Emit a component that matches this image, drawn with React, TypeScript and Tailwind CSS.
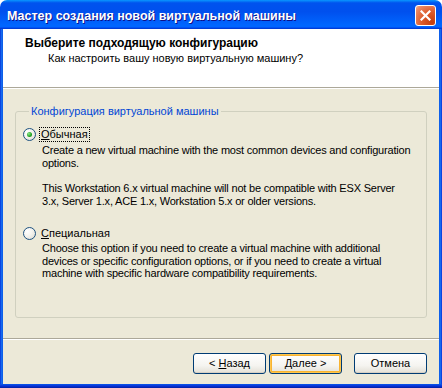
import React from "react";

const font = { fontFamily: '"Liberation Sans", Arial, sans-serif' };

const Radio = ({ checked }: { checked?: boolean }) => (
  <span className="relative flex h-[13px] w-[13px] shrink-0 items-center justify-center rounded-full border border-[#1C5180] bg-[radial-gradient(circle_at_30%_30%,#ffffff_0%,#F4F3EE_45%,#D8D7CE_100%)]">
    {checked && (
      <span className="h-[5px] w-[5px] rounded-full bg-[radial-gradient(circle_at_35%_35%,#8EE88E_0%,#21A121_60%,#1A8B1A_100%)]" />
    )}
  </span>
);

const XpButton = ({
  children,
  isDefault,
}: {
  children: React.ReactNode;
  isDefault?: boolean;
}) => (
  <button
    type="button"
    className={`flex h-[21px] w-[73px] items-center justify-center rounded-[3px] border border-[#003C74] bg-[linear-gradient(to_bottom,#FFFFFF_0%,#F5F4F0_60%,#E3E0D6_100%)] text-[11px] text-black ${
      isDefault ? "shadow-[inset_0_0_0_1px_#FFC64D,inset_0_0_0_2px_#F8B330]" : "shadow-[inset_0_-1px_0_#D6D0C5]"
    }`}>
    {children}
  </button>
);

export default function App() {
  return (
    <div
      className="flex h-[388px] w-[442px] flex-col overflow-hidden rounded-t-[7px] bg-white"
      style={font}>
      {/* title bar */}
      <div className="flex h-[29px] shrink-0 items-center justify-between bg-[linear-gradient(to_bottom,#0997FF_0%,#0053EE_10%,#0050EE_40%,#0066FF_86%,#0066FF_92%,#005BFF_94%,#003DD7_97%,#003DD7_100%)] pl-[7px] pr-[6px]">
        <span className="pt-[3px] text-[12.5px] font-bold text-white [text-shadow:1px_1px_#0F1089]">
          Мастер создания новой виртуальной машины
        </span>
        <span className="mt-[1px] flex h-[21px] w-[21px] items-center justify-center rounded-[3px] border border-white bg-[radial-gradient(circle_at_85%_85%,#C53E0E_0%,#DC5A2A_45%,#EB8A66_85%,#F2B59C_100%)]">
          <svg width="11" height="11" viewBox="0 0 11 11">
            <path d="M1.5 1.5 L9.5 9.5 M9.5 1.5 L1.5 9.5" stroke="white" strokeWidth="2.2" strokeLinecap="square" />
          </svg>
        </span>
      </div>

      {/* frame */}
      <div className="flex flex-1 bg-[#0A4DE0]">
        <div className="w-[3px] shrink-0 bg-[linear-gradient(to_right,#0831D9,#166AEE_50%,#0A5AE8)]" />
        <div className="flex flex-1 flex-col bg-[#ECE9D8] text-[11px] text-black">
          {/* header */}
          <div className="flex h-[58px] shrink-0 flex-col bg-white pt-[7px]">
            <div className="pl-[22px] text-[12px] leading-[14px] font-bold">
              Выберите подходящую конфигурацию
            </div>
            <div className="pl-[45px] pt-[1px] leading-[14px]">
              Как настроить вашу новую виртуальную машину?
            </div>
          </div>
          <div className="h-px bg-[#ACA899]" />
          <div className="h-px bg-white" />

          {/* group */}
          <div className="flex flex-1 flex-col px-[12px] pt-[16px]">
            <fieldset className="flex-1 rounded-[3px] border border-[#D0D0BF] pl-[7px] pr-[4px]">
              <legend className="ml-[6px] px-[2px] leading-[13px] text-[#0046D5]">
                Конфигурация виртуальной машины
              </legend>
              <div className="mt-[8px] flex h-[16px] items-center gap-[3px]">
                <Radio checked />
                <span className="border border-dotted border-black px-[1px] leading-[13px]">
                  <span className="underline">О</span>бычная
                </span>
              </div>
              <div className="mt-[2px] pl-[19px] leading-[12.5px] tracking-[-0.2px]">
                <p>Create a new virtual machine with the most common devices and configuration options.</p>
                <p className="mt-[13px]">
                  This Workstation 6.x virtual machine will not be compatible with ESX Server
                  <br />
                  3.x, Server 1.x, ACE 1.x, Workstation 5.x or older versions.
                </p>
              </div>
              <div className="mt-[18px] flex h-[16px] items-center gap-[3px]">
                <Radio />
                <span className="px-[2px] leading-[13px]">
                  <span className="underline">С</span>пециальная
                </span>
              </div>
              <div className="mt-[1px] pl-[19px] leading-[12.5px] tracking-[-0.2px]">
                <p>
                  Choose this option if you need to create a virtual machine with additional
                  <br />
                  devices or specific configuration options, or if you need to create a virtual
                  <br />
                  machine with specific hardware compatibility requirements.
                </p>
              </div>
            </fieldset>
          </div>

          {/* footer */}
          <div className="mt-[20px] h-px bg-[#ACA899]" />
          <div className="h-px bg-white" />
          <div className="flex items-center justify-end pb-[10px] pr-[12px] pt-[13px]">
            <div className="flex gap-[3px]">
              <XpButton>
                &lt; <span className="ml-[3px] underline">Н</span>азад
              </XpButton>
              <XpButton isDefault>
                <span className="underline">Д</span>алее &gt;
              </XpButton>
            </div>
            <div className="ml-[12px]">
              <XpButton>Отмена</XpButton>
            </div>
          </div>
        </div>
        <div className="w-[3px] shrink-0 bg-[linear-gradient(to_right,#0A5AE8,#166AEE_50%,#0831D9)]" />
      </div>
      <div className="h-[4px] shrink-0 bg-[linear-gradient(to_bottom,#0A5AE8,#0831D9_50%,#001EA0)]" />
    </div>
  );
}
